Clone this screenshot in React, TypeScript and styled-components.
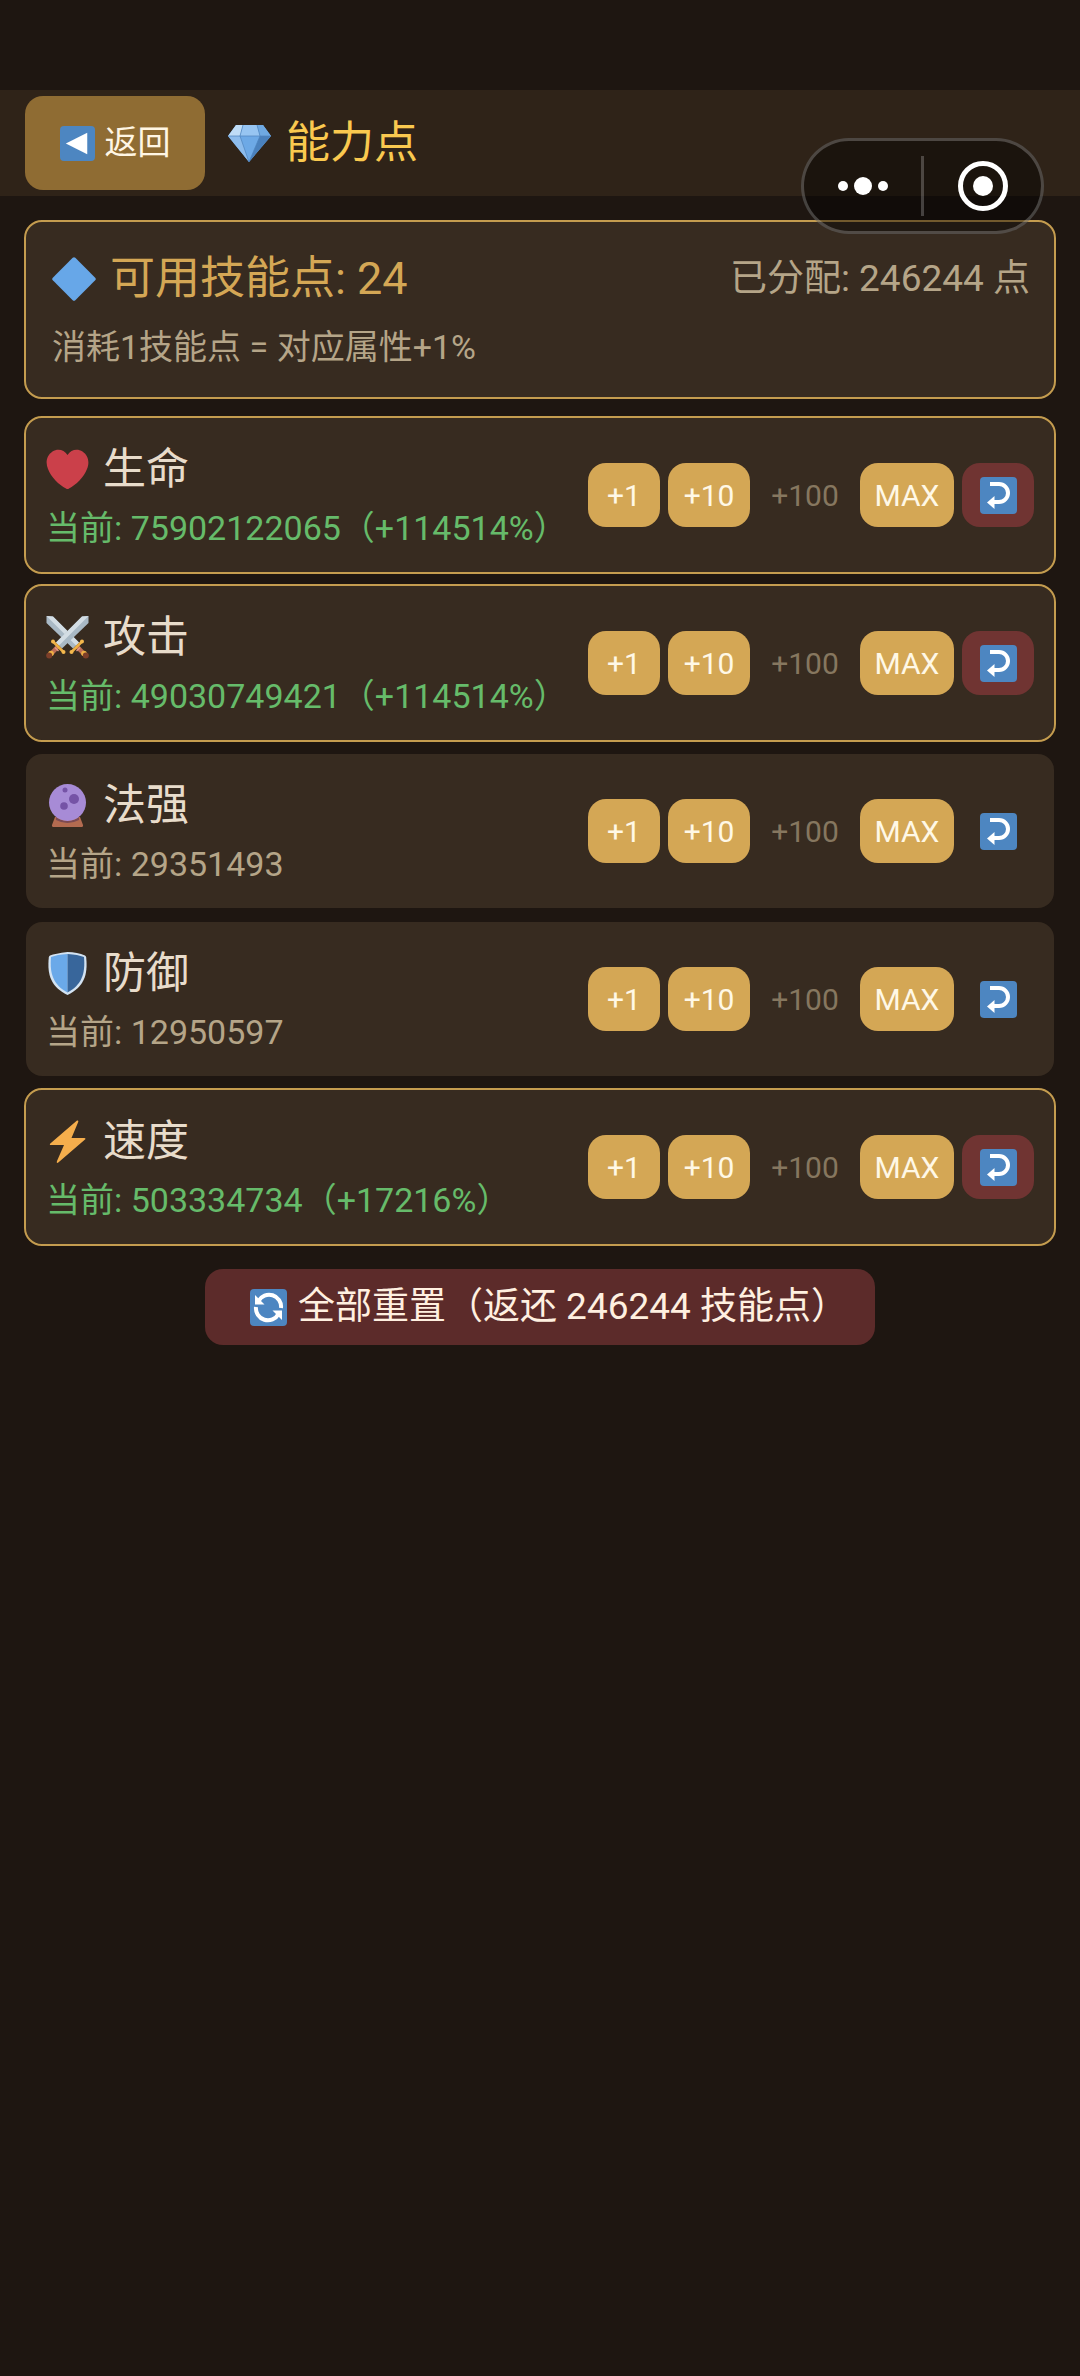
import React from "react";
import styled, { createGlobalStyle } from "styled-components";

const GlobalStyle = createGlobalStyle`
  *, *::before, *::after { box-sizing: border-box; }
  body {
    margin: 0;
    min-height: 100vh;
    background: #1e1611;
    color: #e8dccb;
    font-family: Roboto, "Noto Sans CJK SC", sans-serif;
  }
  button { font-family: inherit; }
`;

const Page = styled.div`
  position: relative;
  padding-top: 90px;
`;

const Header = styled.header`
  display: flex;
  align-items: center;
  gap: 22px;
  height: 106px;
  padding: 0 25px;
  background: #2f2318;
`;

const BackButton = styled.button`
  display: flex;
  align-items: center;
  justify-content: center;
  gap: 10px;
  width: 180px;
  height: 94px;
  padding: 0;
  border: 0;
  border-radius: 18px;
  background: #8f6c33;
  color: #fff6e4;
  font-size: 33px;
  line-height: 50px;
`;

const Title = styled.h1`
  display: flex;
  align-items: center;
  gap: 14px;
  margin: 0;
  color: #fac94f;
  font-size: 44px;
  font-weight: 400;
  line-height: 60px;
`;

const Capsule = styled.div`
  position: absolute;
  top: 138px;
  right: 36px;
  display: grid;
  grid-template-columns: 1fr 3px 1fr;
  align-items: center;
  width: 243px;
  height: 96px;
  border: 3px solid rgba(255, 255, 255, 0.22);
  border-radius: 48px;
  background: rgba(0, 0, 0, 0.42);
`;

const CapsuleButton = styled.button`
  display: flex;
  align-items: center;
  justify-content: center;
  height: 100%;
  padding: 0;
  border: 0;
  background: none;
`;

const CapsuleDivider = styled.span`
  height: 60px;
  background: rgba(255, 255, 255, 0.22);
`;

const Content = styled.main`
  display: flex;
  flex-direction: column;
  padding: 24px 24px 0;
`;

const Summary = styled.section`
  margin-bottom: 17px;
  height: 179px;
  padding: 24px 24px 24px 26px;
  border: 2px solid #c49c4f;
  border-radius: 18px;
  background: #372b20;
`;

const SummaryTop = styled.div`
  display: flex;
  align-items: center;
  justify-content: space-between;
  height: 66px;
`;

const Available = styled.h2`
  display: flex;
  align-items: center;
  gap: 14px;
  margin: 0;
  color: #d4a755;
  font-size: 45px;
  font-weight: 400;
  line-height: 60px;
`;

const Allocated = styled.span`
  color: #b5a588;
  font-size: 37px;
  line-height: 50px;
`;

const Hint = styled.p`
  margin: 10px 0 0;
  color: #b5a588;
  font-size: 34px;
  line-height: 50px;
`;

const StatList = styled.ul`
  display: flex;
  flex-direction: column;
  gap: 10px;
  margin: 0;
  padding: 0;
  list-style: none;
`;

const StatRow = styled.li<{ $boosted: boolean }>`
  display: flex;
  align-items: center;
  justify-content: space-between;
  height: 158px;
  padding: 0 20px;
  border: 2px solid ${(p) => (p.$boosted ? "#c49c4f" : "transparent")};
  border-radius: 18px;
  background: #372b20 padding-box;
`;

const StatInfo = styled.div`
  padding-top: 2px;
`;

const StatName = styled.h3`
  display: flex;
  align-items: center;
  gap: 14px;
  margin: 0 0 4px;
  font-size: 43px;
  font-weight: 400;
  line-height: 60px;
`;

const StatValue = styled.p<{ $boosted: boolean }>`
  margin: 0;
  color: ${(p) => (p.$boosted ? "#66bb6a" : "#b5a588")};
  font-size: 34px;
  line-height: 50px;
  white-space: nowrap;
`;

const Actions = styled.div`
  display: grid;
  grid-template-columns: 72px 82px 94px 94px 72px;
  gap: 8px;
`;

const ActionButton = styled.button<{ $tone?: "danger" }>`
  display: flex;
  align-items: center;
  justify-content: center;
  height: 64px;
  padding: 0;
  border: 0;
  border-radius: 18px;
  background: ${(p) => (p.$tone === "danger" ? "#703432" : "#d4a755")};
  color: #fff8e6;
  font-size: 30px;

  &:disabled {
    background: none;
    color: #86775f;
  }
`;

const ResetAll = styled.button`
  display: flex;
  align-items: center;
  align-self: center;
  gap: 11px;
  height: 76px;
  margin-top: 23px;
  padding: 0 27px 0 45px;
  border: 0;
  border-radius: 18px;
  background: #5c2b2a;
  color: #fff0e0;
  font-size: 37px;
  line-height: 50px;
`;

const Glyph = styled.svg<{ $size: number }>`
  display: block;
  flex: none;
  width: ${(p) => p.$size}px;
  height: ${(p) => p.$size}px;
`;

const BackIcon = () => (
  <Glyph $size={35} viewBox="0 0 36 36" aria-hidden="true">
    <rect width="36" height="36" rx="4" fill="#4d86c1" />
    <path d="M6 18 28 7v22z" fill="#fff" />
  </Glyph>
);

const GemIcon = () => (
  <Glyph $size={45} viewBox="0 0 45 45" aria-hidden="true">
    <path d="M9 4h27l8 11-22 26L1 15z" fill="#6da9e6" />
    <path d="M9 4h7l-3 11H1z" fill="#bfdcf6" />
    <path d="M16 4h14l3 11H13z" fill="#97c5f2" />
    <path d="M30 4h6l8 11H33z" fill="#6fa9e2" />
    <path d="M1 15h12l9 26z" fill="#8dbcec" />
    <path d="M33 15h11L22 41z" fill="#4a81bd" />
    <path d="M1 15h43M16 4l-3 11 9 26 11-26-3-11" fill="none" stroke="#4d83bb" strokeWidth="0.7" />
  </Glyph>
);

const DiamondIcon = () => (
  <Glyph $size={44} viewBox="0 0 44 44" aria-hidden="true">
    <path d="M20.700 .8q1.300-1.200 2.600 0l19.900 19.900q1.200 1.300 0 2.600L23.300 43.200q-1.300 1.200-2.600 0L.8 23.300q-1.200-1.300 0-2.600z" fill="#67a7e8" />
  </Glyph>
);

const HeartIcon = () => (
  <Glyph $size={43} viewBox="0 0 43 43" aria-hidden="true">
    <path d="M21.500 7C18 1 11 .5 6.500 3.500 0 8-.5 15 2 21c3 8 11 16 18 19.500q1.500 1 3 0C30 37 38 29 41 21c2.500-6 2-13-4.500-17.500C32 .5 25 1 21.500 7z" fill="#cb404a" />
  </Glyph>
);

const Sword = () => (
  <g>
    <path d="M42.500 0 36 .5 10 26.500l6 6L42.500 7z" fill="#a9b9c5" />
    <path d="M42.500 0 36 .5 10 26.500l3 3z" fill="#d3dde4" />
    <path d="m12.500 30-8 8.500" stroke="#bd6e56" strokeWidth="4.500" />
    <path d="m9 31.500 3.500 3.500" stroke="#e69c8c" strokeWidth="1.200" />
    <path d="m7.500 26 9.500 9.500" stroke="#eeb045" strokeWidth="2.500" strokeLinecap="round" />
    <circle cx="7" cy="25.500" r="2" fill="#f4b84d" />
    <circle cx="17.500" cy="36" r="2" fill="#f4b84d" />
    <circle cx="5" cy="37.500" r="2.800" fill="#eeb045" />
    <circle cx="3.200" cy="39.500" r="3" fill="#7d3f29" />
  </g>
);

const SwordsIcon = () => (
  <Glyph $size={43} viewBox="0 0 43 43" aria-hidden="true">
    <g transform="matrix(-1 0 0 1 43 0)">
      <Sword />
    </g>
    <Sword />
  </Glyph>
);

const OrbIcon = () => (
  <Glyph $size={43} viewBox="0 0 43 43" aria-hidden="true">
    <path d="M9 33h25l3 8q.5 2-2 2H8q-2.500 0-2-2z" fill="#b36b50" />
    <path d="M10 33q11.500 8 23 0v3q-11.500 6-23 0z" fill="#7c4a52" />
    <circle cx="21.500" cy="18.500" r="18.500" fill="#a78bd6" />
    <circle cx="19" cy="6" r="2.500" fill="#7553a6" />
    <circle cx="28" cy="15" r="5" fill="#7553a6" />
    <circle cx="18" cy="22" r="3.800" fill="#7553a6" />
  </Glyph>
);

const ShieldIcon = () => (
  <Glyph $size={43} viewBox="0 0 43 43" aria-hidden="true">
    <path d="M21.500 0C28 0 34 1.500 39 3.500q1 .5 1.200 2C42 23 38 35 21.500 43 5 35 1 23 2.800 5.500Q3 4 4 3.500 9 1.500 21.500 0z" fill="#d3e3f2" />
    <path d="M21.500 2C14 2.300 9.500 3.500 5 5 3.500 22 7.500 33 21.500 40.500z" fill="#6aa9e9" />
    <path d="M21.500 2C29 2.300 33.500 3.500 38 5c1.500 17-2.500 28-16.500 35.500z" fill="#38669b" />
  </Glyph>
);

const BoltIcon = () => (
  <Glyph $size={43} viewBox="0 0 43 43" aria-hidden="true">
    <path d="M31 .6 4.300 23.600q-1.200 1.400.7 1.400h13L11 41q-.8 2.600 1.300 1.600L39 19.600q1.200-1.600-.8-1.600H25.500L32.200 2q.5-2-1.200-1.400z" fill="#f5ae4c" />
  </Glyph>
);

const ReturnIcon = () => (
  <Glyph $size={37} viewBox="0 0 37 37" aria-hidden="true">
    <rect width="37" height="37" rx="4" fill="#4d86c1" />
    <path d="M10 7h9a9 9 0 0 1 0 18h-5" fill="none" stroke="#fff" strokeWidth="4" />
    <path d="M7 25.500 14.500 19v13z" fill="#fff" />
  </Glyph>
);

const RefreshIcon = () => (
  <Glyph $size={37} viewBox="0 0 37 37" aria-hidden="true">
    <rect width="37" height="37" rx="4" fill="#4d86c1" />
    <path d="M8.500 12A12 12 0 0 1 31 19M28.500 25A12 12 0 0 1 6 18" fill="none" stroke="#fff" strokeWidth="4" />
    <path d="M5 6v9.500h9.500z" fill="#fff" />
    <path d="M32 31v-9.500h-9.500z" fill="#fff" />
  </Glyph>
);

const DotsIcon = () => (
  <Glyph $size={52} viewBox="0 0 52 52" aria-hidden="true">
    <g fill="#fff">
      <circle cx="6" cy="26" r="5" />
      <circle cx="26" cy="26" r="9" />
      <circle cx="46" cy="26" r="5" />
    </g>
  </Glyph>
);

const TargetIcon = () => (
  <Glyph $size={50} viewBox="0 0 50 50" aria-hidden="true">
    <circle cx="25" cy="25" r="22.500" fill="none" stroke="#fff" strokeWidth="5" />
    <circle cx="25" cy="25" r="10" fill="#fff" />
  </Glyph>
);

type Stat = {
  name: string;
  value: string;
  bonus?: string;
  Icon: React.ComponentType;
};

const stats: Stat[] = [
  { name: "生命", value: "75902122065", bonus: "114514", Icon: HeartIcon },
  { name: "攻击", value: "49030749421", bonus: "114514", Icon: SwordsIcon },
  { name: "法强", value: "29351493", Icon: OrbIcon },
  { name: "防御", value: "12950597", Icon: ShieldIcon },
  { name: "速度", value: "503334734", bonus: "17216", Icon: BoltIcon },
];

const availablePoints = 24;
const allocatedPoints = 246244;
const steps = [1, 10, 100];

export default function App() {
  return (
    <>
      <GlobalStyle />
      <Page>
        <Header>
          <BackButton type="button">
            <BackIcon />
            返回
          </BackButton>
          <Title>
            <GemIcon />
            能力点
          </Title>
        </Header>
        <Content>
          <Summary>
            <SummaryTop>
              <Available>
                <DiamondIcon />
                {`可用技能点: ${availablePoints}`}
              </Available>
              <Allocated>{`已分配: ${allocatedPoints} 点`}</Allocated>
            </SummaryTop>
            <Hint>消耗1技能点 = 对应属性+1%</Hint>
          </Summary>
          <StatList>
            {stats.map(({ name, value, bonus, Icon }) => (
              <StatRow key={name} $boosted={!!bonus}>
                <StatInfo>
                  <StatName>
                    <Icon />
                    {name}
                  </StatName>
                  <StatValue $boosted={!!bonus}>
                    {`当前: ${value}${bonus ? `（+${bonus}%）` : ""}`}
                  </StatValue>
                </StatInfo>
                <Actions>
                  {steps.map((step) => (
                    <ActionButton key={step} type="button" disabled={step > availablePoints}>
                      {`+${step}`}
                    </ActionButton>
                  ))}
                  <ActionButton type="button">MAX</ActionButton>
                  <ActionButton type="button" $tone="danger" disabled={!bonus} aria-label={`重置${name}`}>
                    <ReturnIcon />
                  </ActionButton>
                </Actions>
              </StatRow>
            ))}
          </StatList>
          <ResetAll type="button">
            <RefreshIcon />
            {`全部重置（返还 ${allocatedPoints} 技能点）`}
          </ResetAll>
        </Content>
        <Capsule>
          <CapsuleButton type="button" aria-label="更多">
            <DotsIcon />
          </CapsuleButton>
          <CapsuleDivider />
          <CapsuleButton type="button" aria-label="关闭">
            <TargetIcon />
          </CapsuleButton>
        </Capsule>
      </Page>
    </>
  );
}
